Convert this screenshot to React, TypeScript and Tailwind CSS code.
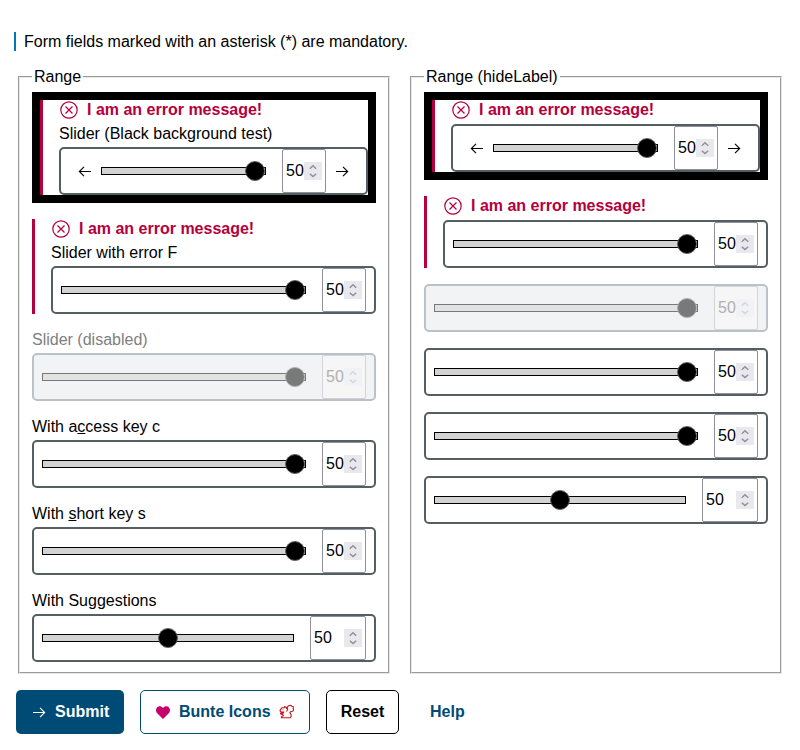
import type { ReactNode } from 'react';

type FieldProps = {
  label?: ReactNode;
  error?: boolean;
  disabled?: boolean;
  arrows?: boolean;
  suggestions?: boolean;
};

function Arrow({ left = false }: { left?: boolean }) {
  return (
    <svg
      width="14"
      height="12"
      viewBox="0 0 14 12"
      fill="none"
      stroke="currentColor"
      strokeWidth="1.1"
      className={left ? 'shrink-0 -scale-x-100' : 'shrink-0'}
    >
      <path d="M1 6.5H12.7M8 1.8L12.7 6.5L8 11.2" />
    </svg>
  );
}

function ErrorMessage() {
  return (
    <div className="flex h-6 gap-[9px] pl-px font-bold text-[#b4003c]">
      <svg width="18" height="18" viewBox="0 0 18 18" fill="none" stroke="currentColor" strokeWidth="1.2" className="mt-px">
        <circle cx="9" cy="9" r="8.2" />
        <path d="M5.5 5.5L12.5 12.5M12.5 5.5L5.5 12.5" />
      </svg>
      <span className="leading-[19px]">I am an error message!</span>
    </div>
  );
}

function NumberBox({ wide, disabled }: { wide?: boolean; disabled?: boolean }) {
  return (
    <div
      className={`flex h-11 shrink-0 items-center justify-between rounded-[2px] border pr-[3px] pl-[3px] ${
        wide ? 'w-14' : 'w-11'
      } ${disabled ? 'border-[#d3d4da] bg-[#f6f6f6] text-[#b0b0b0]' : 'border-[#8f8f9d] bg-white'}`}
    >
      <span className="leading-[18px]">50</span>
      <svg
        width="18"
        height="18"
        viewBox="0 0 18 18"
        fill="none"
        strokeWidth="1.5"
        className={`shrink-0 ${disabled ? 'bg-[#f1f2f5] stroke-[#d5d5dc]' : 'bg-[#e9e9ed] stroke-[#8f8f9d]'}`}
      >
        <path d="M5.8 6.7L9 3.8L12.2 6.7M5.8 11.7L9 14.6L12.2 11.7" />
      </svg>
    </div>
  );
}

function Slider({ disabled, arrows, suggestions }: FieldProps) {
  return (
    <div
      className={`flex h-12 items-center rounded-[5px] border-2 ${arrows ? 'pr-[17px] pl-[17px]' : 'px-2'} ${
        disabled ? 'border-[#bac2c8] bg-[#f1f3f5]' : 'border-[#535f61] bg-white'
      }`}
    >
      {arrows && (
        <span className="mr-[9px] flex">
          <Arrow left />
        </span>
      )}
      <div
        className={`relative h-2 flex-1 border ${
          disabled ? 'border-[#787979] bg-[#e2e2e2]' : 'border-black bg-[#d3d3d3]'
        }`}
      >
        <span
          className={`absolute top-1/2 size-5 -translate-y-1/2 rounded-full border ${
            suggestions ? 'left-1/2 -translate-x-1/2' : 'right-0'
          } ${disabled ? 'border-[#b0b0b0] bg-[#787979]' : 'border-[#666] bg-black'}`}
        />
      </div>
      <div className="ml-4 flex">
        <NumberBox wide={suggestions} disabled={disabled} />
      </div>
      {arrows && (
        <span className="ml-[9px] flex">
          <Arrow />
        </span>
      )}
    </div>
  );
}

function Field(props: FieldProps) {
  const { label, error, disabled } = props;
  return (
    <div className={error ? 'border-l-[3px] border-[#b4003c] bg-white pl-4' : ''}>
      {error && <ErrorMessage />}
      {label && <div className={`h-[23px] leading-[19px] ${disabled ? 'text-[#808080]' : ''}`}>{label}</div>}
      <Slider {...props} />
    </div>
  );
}

function Group({ legend, children }: { legend: string; children: ReactNode }) {
  return (
    <section className="h-[598px] w-[372px] border border-t-[#9a9a9a] border-r-[#e8e8e8] border-b-[#e8e8e8] border-l-[#9a9a9a]">
      <div className="h-full border border-t-[#e8e8e8] border-r-[#9a9a9a] border-b-[#9a9a9a] border-l-[#e8e8e8] px-3">
        <h2 className="-mt-[11px] h-[25px] w-fit bg-white px-0.5 leading-[19px]">{legend}</h2>
        <div className="flex flex-col gap-4">{children}</div>
      </div>
    </section>
  );
}

function BlackFrame({ children }: { children: ReactNode }) {
  return <div className="border-8 border-black bg-white">{children}</div>;
}

function Squirrel() {
  return (
    <svg width="16" height="16" viewBox="0 0 16 16" fill="none" stroke="#c0191f" strokeWidth="1.1" strokeLinejoin="round">
      <path d="M7.6 4.9L7.2 3.4L5.6 2.6L5.2 3.7L3.2 3.7L1.6 5.3L1 6.8L2.2 8L4.8 8L4.2 9.2L1.8 8.8L1.6 9.9L4 10.6L4.4 11.8L2.6 12.4L2.3 13.8H11L12.2 12.3L12 10.2L10.9 8.6L11.8 7.5L13.8 7.2L14.7 5.6L14 4.6L14.6 2.7L12.8 2.2L11.6 1.3L9.4 1.8L8.2 3.2L8.6 5.6L7.5 7.6" />
      <path d="M3.7 5.6H4.3" />
    </svg>
  );
}

export default function App() {
  return (
    <main className="h-[750px] w-[800px] overflow-hidden bg-white pt-8 font-['Liberation_Sans',Arial,sans-serif] text-base text-black">
      <p className="ml-3.5 h-[19px] w-fit border-l-2 border-[#0077b6] pl-2 leading-[19px]">
        Form fields marked with an asterisk (*) are mandatory.
      </p>

      <div className="mt-[25px] ml-[18px] flex gap-5">
        <Group legend="Range">
          <BlackFrame>
            <Field error arrows label="Slider (Black background test)" />
          </BlackFrame>
          <Field error label="Slider with error F" />
          <Field disabled label="Slider (disabled)" />
          <Field label={<>With a<u>c</u>cess key c</>} />
          <Field label={<>With <u>s</u>hort key s</>} />
          <Field suggestions label="With Suggestions" />
        </Group>
        <Group legend="Range (hideLabel)">
          <BlackFrame>
            <Field error arrows />
          </BlackFrame>
          <Field error />
          <Field disabled />
          <Field />
          <Field />
          <Field suggestions />
        </Group>
      </div>

      <div className="mt-4 ml-4 flex gap-4 font-bold">
        <button className="flex h-11 w-[108px] items-center gap-2 rounded-[5px] bg-[#004b76] pl-4 text-white">
          <Arrow />
          <span className="pl-px">Submit</span>
        </button>
        <button className="flex h-11 w-[170px] items-center rounded-[5px] border border-[#004b76] pl-[15px] text-[#004b76]">
          <svg width="14" height="13" viewBox="0 0 14 13" fill="#c8006e">
            <path d="M7 13L1 7C-.5 5.4-.2 2.6 1.2 1.2C2.8-.3 5.6-.1 7 2C8.4-.1 11.2-.3 12.8 1.2C14.2 2.6 14.5 5.4 13 7Z" />
          </svg>
          <span className="mr-2 ml-[9px]">Bunte Icons</span>
          <Squirrel />
        </button>
        <button className="h-11 w-[73px] rounded-[5px] border border-black">Reset</button>
        <button className="ml-[15px] h-11 text-[#004b76]">Help</button>
      </div>
    </main>
  );
}
